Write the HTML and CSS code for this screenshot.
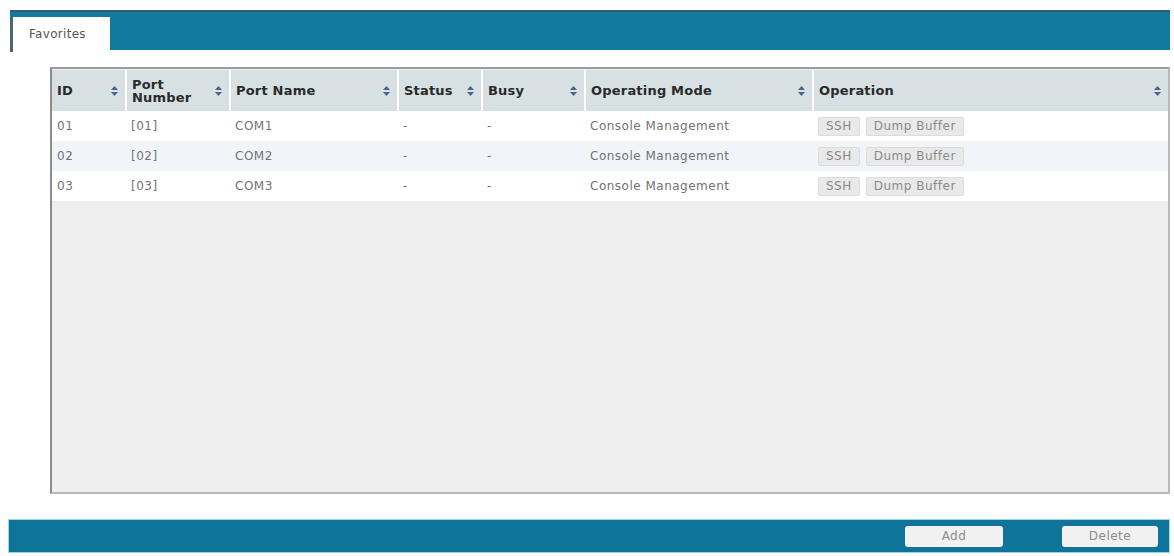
FILE: index.html
```html
<!DOCTYPE html>
<html lang="en">
<head>
    <meta charset="UTF-8">
    <title>Favorites</title>
    <link rel="stylesheet" href="styles.css">
</head>
<body>
<div class="page">
    <!--顶部标签栏-->
    <div class="tabbar">
        <div class="tab">Favorites</div>
    </div>
    <!--表格区域-->
    <div class="frame">
        <table class="grid">
            <colgroup>
                <col class="c-id">
                <col class="c-pnum">
                <col class="c-pname">
                <col class="c-status">
                <col class="c-busy">
                <col class="c-mode">
                <col class="c-op">
            </colgroup>
            <thead>
            <tr>
                <th><div class="th"><span>ID</span><svg class="sort" viewBox="0 0 7 10"><path d="M3.5 0L7 4H0z M3.5 10L0 6h7z"/></svg></div></th>
                <th><div class="th"><span>Port<br>Number</span><svg class="sort" viewBox="0 0 7 10"><path d="M3.5 0L7 4H0z M3.5 10L0 6h7z"/></svg></div></th>
                <th><div class="th"><span>Port Name</span><svg class="sort" viewBox="0 0 7 10"><path d="M3.5 0L7 4H0z M3.5 10L0 6h7z"/></svg></div></th>
                <th><div class="th"><span>Status</span><svg class="sort" viewBox="0 0 7 10"><path d="M3.5 0L7 4H0z M3.5 10L0 6h7z"/></svg></div></th>
                <th><div class="th"><span>Busy</span><svg class="sort" viewBox="0 0 7 10"><path d="M3.5 0L7 4H0z M3.5 10L0 6h7z"/></svg></div></th>
                <th><div class="th"><span>Operating Mode</span><svg class="sort" viewBox="0 0 7 10"><path d="M3.5 0L7 4H0z M3.5 10L0 6h7z"/></svg></div></th>
                <th class="last"><div class="th"><span>Operation</span><svg class="sort" viewBox="0 0 7 10"><path d="M3.5 0L7 4H0z M3.5 10L0 6h7z"/></svg></div></th>
            </tr>
            </thead>
            <tbody>
            <tr>
                <td>01</td>
                <td>[01]</td>
                <td>COM1</td>
                <td>-</td>
                <td>-</td>
                <td>Console Management</td>
                <td><span class="btn">SSH</span><span class="btn">Dump Buffer</span></td>
            </tr>
            <tr class="alt">
                <td>02</td>
                <td>[02]</td>
                <td>COM2</td>
                <td>-</td>
                <td>-</td>
                <td>Console Management</td>
                <td><span class="btn">SSH</span><span class="btn">Dump Buffer</span></td>
            </tr>
            <tr>
                <td>03</td>
                <td>[03]</td>
                <td>COM3</td>
                <td>-</td>
                <td>-</td>
                <td>Console Management</td>
                <td><span class="btn">SSH</span><span class="btn">Dump Buffer</span></td>
            </tr>
            </tbody>
        </table>
    </div>
    <!--底部按钮栏-->
    <div class="footer">
        <span class="fbtn add">Add</span>
        <span class="fbtn del">Delete</span>
    </div>
</div>
</body>
</html>
```

FILE: styles.css
```css
* {
    margin: 0;
    padding: 0;
    box-sizing: border-box;
}

body {
    background: #fff;
    font-family: "DejaVu Sans", Verdana, sans-serif;
    font-size: 12px;
    letter-spacing: 0.5px;
    color: #666;
}

.page {
    width: 1174px;
    padding-top: 10px;
}

.tabbar {
    margin: 0 4px 0 10px;
    height: 40px;
    background: #137a9f;
    border-top: 2px solid #2f5d73;
    display: flex;
    align-items: flex-end;
}

.tab {
    width: 100px;
    height: 35px;
    margin-bottom: -2px;
    background: #fff;
    border-left: 3px solid #4b6675;
    padding: 10px 0 0 16px;
    font-size: 12px;
    letter-spacing: 0.3px;
    color: #555;
}

.frame {
    margin: 17px 4px 0 50px;
    height: 427px;
    background: #efefef;
    border: 2px solid #b8b8b8;
    border-top-color: #9a9a9a;
    border-left-color: #8c8c8c;
    padding-top: 1px;
}

.grid {
    width: 100%;
    border-collapse: collapse;
    table-layout: fixed;
    background: #fff;
}

.c-id { width: 74px; }
.c-pnum { width: 104px; }
.c-pname { width: 168px; }
.c-status { width: 84px; }
.c-busy { width: 103px; }
.c-mode { width: 228px; }

.grid th {
    height: 41px;
    background: #d7e1e4;
    border-right: 2px solid #fff;
    text-align: left;
    font-weight: bold;
    font-size: 13px;
    letter-spacing: 0.2px;
    color: #2a2a2a;
    line-height: 13px;
    padding: 0 7px 0 5px;
}

.grid th.last {
    border-right: none;
}

.th {
    display: flex;
    align-items: center;
    justify-content: space-between;
}

.sort {
    width: 7px;
    height: 10px;
    fill: #476683;
}

.grid td {
    height: 30px;
    padding: 0 5px;
    color: #727272;
    white-space: nowrap;
}

.grid tr.alt td {
    background: #f1f5f9;
}

.btn {
    display: inline-block;
    height: 19px;
    line-height: 17px;
    padding: 0 7px;
    margin-right: 6px;
    background: #e9e9e9;
    border: 1px solid #dcdcdc;
    border-radius: 2px;
    color: #8a8a8a;
    font-size: 12px;
}

.footer {
    margin: 25px 4px 0 8px;
    height: 34px;
    background: #0f7499;
    border: 1px solid #9ad6e8;
    display: flex;
    align-items: center;
    justify-content: flex-end;
    padding-right: 11px;
}

.fbtn {
    height: 21px;
    line-height: 21px;
    text-align: center;
    background: #f1f1f1;
    border-radius: 3px;
    color: #8c8c8c;
    font-size: 12px;
}

.add {
    width: 98px;
    margin-right: 59px;
}

.del {
    width: 96px;
}
```
